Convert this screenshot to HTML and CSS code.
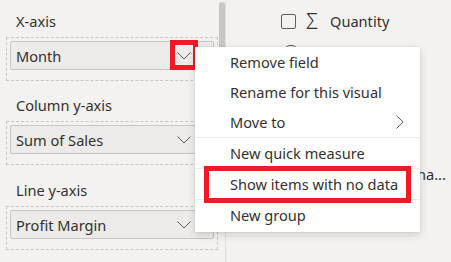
FILE: index.html
```html
<!DOCTYPE html>
<html lang="en">
<head>
    <meta charset="UTF-8">
    <meta name="viewport" content="width=device-width, initial-scale=1.0">
    <title>Fields pane</title>
    <link rel="stylesheet" href="styles.css">
</head>
<body>

    <div class="panes">
        <div class="wells">
            <div class="scroll-thumb"></div>

            <div class="section">
                <div class="section-label">X-axis</div>
                <div class="well">
                    <div class="pill">
                        <span class="pill-text">Month</span>
                        <svg class="pill-chevron" width="14" height="8" viewBox="0 0 14 8"><path d="M0.5 0.5 L7 7 L13.5 0.5" fill="none" stroke="#605e5c" stroke-width="1"/></svg>
                    </div>
                </div>
            </div>

            <div class="section">
                <div class="section-label">Column y-axis</div>
                <div class="well">
                    <div class="pill">
                        <span class="pill-text">Sum of Sales</span>
                        <svg class="pill-chevron" width="14" height="8" viewBox="0 0 14 8"><path d="M0.5 0.5 L7 7 L13.5 0.5" fill="none" stroke="#605e5c" stroke-width="1"/></svg>
                    </div>
                </div>
            </div>

            <div class="section">
                <div class="section-label">Line y-axis</div>
                <div class="well">
                    <div class="pill">
                        <span class="pill-text">Profit Margin</span>
                        <svg class="pill-chevron" width="14" height="8" viewBox="0 0 14 8"><path d="M0.5 0.5 L7 7 L13.5 0.5" fill="none" stroke="#605e5c" stroke-width="1"/></svg>
                    </div>
                </div>
            </div>
        </div>

        <div class="fields">
            <div class="field-row">
                <span class="checkbox"></span>
                <span class="sigma">Σ</span>
                <span class="field-name">Quantity</span>
            </div>
            <div class="field-row table-row">
                <svg class="expander" width="6" height="10" viewBox="0 0 6 10"><path d="M0.5 0.5 L5 5 L0.5 9.5" fill="none" stroke="#605e5c" stroke-width="1"/></svg>
                <span class="table-icon"></span>
            </div>
            <div class="field-row"></div>
            <div class="field-row"></div>
            <div class="field-row"></div>
            <div class="field-row truncated-row">
                <span class="field-name">na...</span>
            </div>
        </div>
    </div>

    <!-- annotation around the field dropdown -->
    <span class="highlight highlight-chevron"></span>

    <div class="menu">
        <div class="menu-item">Remove field</div>
        <div class="menu-item">Rename for this visual</div>
        <div class="menu-item">
            Move to
            <svg class="submenu-arrow" width="8" height="14" viewBox="0 0 8 14"><path d="M0.5 0.5 L7 7 L0.5 13.5" fill="none" stroke="#605e5c" stroke-width="1"/></svg>
        </div>
        <div class="menu-divider"></div>
        <div class="menu-item">New quick measure</div>
        <div class="menu-divider"></div>
        <div class="menu-item">Show items with no data</div>
        <div class="menu-divider"></div>
        <div class="menu-item">New group</div>
        <span class="highlight highlight-item"></span>
    </div>

</body>
</html>
```

FILE: styles.css
```css
body {
    margin: 0;
    font-family: "Noto Sans", "Open Sans", sans-serif;
    font-size: 14.6px;
    color: #323130;
    background-color: #f3f2f1;
    width: 451px;
    height: 262px;
    overflow: hidden;
    position: relative;
}
.panes {
    display: flex;
    height: 262px;
}
.wells {
    position: relative;
    width: 226px;
    padding: 11px 0 0 6px;
    box-sizing: border-box;
    border-right: 1px solid #e1dfdd;
}
.scroll-thumb {
    position: absolute;
    left: 219px;
    top: 2px;
    width: 6px;
    height: 110px;
    background-color: #c8c6c4;
    border-radius: 3px;
}
.section {
    margin-bottom: 14px;
}
.section:last-child {
    margin-top: 15px;
}
.section-label {
    line-height: 20px;
    padding-left: 10px;
    margin-bottom: 6px;
}
.well {
    width: 212px;
    box-sizing: border-box;
    border: 1px dashed #c8c6c4;
    padding: 3px 3px 10px 3px;
}
.pill {
    display: flex;
    align-items: center;
    height: 29px;
    box-sizing: border-box;
    background-color: #edebe9;
    border: 1px solid #c8c6c4;
    border-radius: 2px;
    padding-left: 5px;
    line-height: 20px;
}
.pill-text {
    flex: 1;
}
.pill-chevron {
    margin-right: 22px;
}
.fields {
    flex: 1;
    padding-top: 6px;
}
.field-row {
    display: flex;
    align-items: center;
    height: 30.6px;
    padding-left: 55px;
    white-space: nowrap;
}
.checkbox {
    width: 15px;
    height: 15px;
    box-sizing: border-box;
    border: 1px solid #605e5c;
    border-radius: 2px;
}
.sigma {
    width: 16px;
    margin-left: 10px;
    font-size: 21px;
    font-weight: 300;
    line-height: 1;
}
.field-name {
    margin-left: 8px;
}
.table-row {
    padding-left: 38px;
}
.expander {
    margin-right: 14px;
}
.table-icon {
    width: 12px;
    height: 12px;
    border: 1px solid #605e5c;
    border-radius: 6px 6px 2px 2px;
}
.truncated-row {
    padding-left: 183px;
}
.menu {
    position: absolute;
    left: 195px;
    top: 47px;
    width: 225px;
    padding-bottom: 2px;
    background-color: #fff;
    box-shadow: 0 3px 8px rgba(0, 0, 0, 0.14), 0 0 2px rgba(0, 0, 0, 0.1);
}
.menu-item {
    display: flex;
    align-items: center;
    height: 30px;
    padding-left: 35px;
    color: #323130;
}
.submenu-arrow {
    margin-left: auto;
    margin-right: 16px;
}
.menu-divider {
    height: 1px;
    background-color: #edebe9;
}
.highlight {
    position: absolute;
    box-sizing: border-box;
    border: 5px solid #ed1c24;
}
.highlight-chevron {
    left: 170px;
    top: 40px;
    width: 28px;
    height: 30px;
}
.highlight-item {
    left: 9px;
    top: 119px;
    width: 207px;
    height: 37px;
}
```
